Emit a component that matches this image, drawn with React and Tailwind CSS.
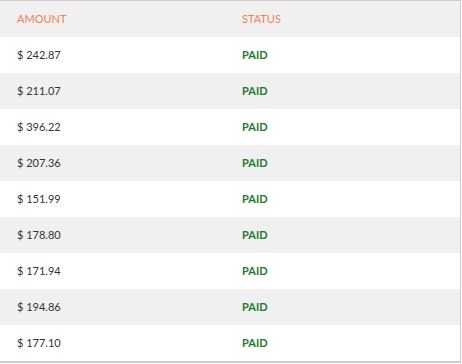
import React from 'react';

const amounts = ['242.87', '211.07', '396.22', '207.36', '151.99', '178.80', '171.94', '194.86', '177.10'];

export default function App() {
   return (
      <div className="w-[462px] h-[364px] bg-white" style={{ fontFamily: 'Lato, "Open Sans", sans-serif' }}>
         <div className="w-[461px] border-t border-r border-b-2 border-[#cccccc]">
            {/* Header */}
            <div className="flex items-center h-9 bg-[#f0f0f0] text-[11px] text-[#f2814f]">
               <div className="w-[225px] pl-[17px]">AMOUNT</div>
               <div className="pl-[17px]">STATUS</div>
            </div>

            {/* Rows */}
            {amounts.map((amount, index) => (
               <div key={index} className={`flex items-center h-9 text-[11px] ${index % 2 === 1 ? 'bg-[#f0f0f0]' : 'bg-white'}`}>
                  <div className="w-[225px] pl-[17px] text-[#333333]">$ {amount}</div>
                  <div className="pl-[17px] font-bold text-[#1e7a2e]">PAID</div>
               </div>
            ))}
         </div>
      </div>
   );
}
